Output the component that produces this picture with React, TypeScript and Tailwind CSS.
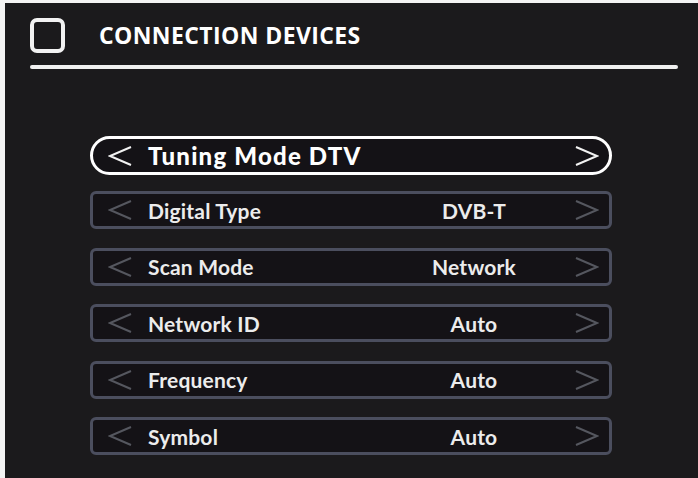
import React from "react";

type Row = { label: string; value: string };

const rows: Row[] = [
  { label: "Digital Type", value: "DVB-T" },
  { label: "Scan Mode", value: "Network" },
  { label: "Network ID", value: "Auto" },
  { label: "Frequency", value: "Auto" },
  { label: "Symbol", value: "Auto" },
];

function Chevron({ dir, color }: { dir: "left" | "right"; color: string }) {
  const pts = dir === "left" ? "23,1 2,10 23,19" : "1,1 22,10 1,19";
  return (
    <svg width="24" height="20" viewBox="0 0 24 20" className="shrink-0">
      <polyline points={pts} fill="none" stroke={color} strokeWidth="2" strokeLinejoin="miter" />
    </svg>
  );
}

function MenuRow({ row }: { row: Row }) {
  return (
    <div className="relative flex items-center h-[38px] border-[3px] border-[#4b4e5e] rounded-[6px] bg-[#141216]">
      <div className="ml-[15px]">
        <Chevron dir="left" color="#55575f" />
      </div>
      <span className="ml-[16px] text-[21px] font-bold text-[#ececec] leading-none tracking-[0.2px]">{row.label}</span>
      <span className="absolute left-[381px] -translate-x-1/2 text-[21px] font-bold text-[#ececec] leading-none tracking-[0.2px]">
        {row.value}
      </span>
      <div className="ml-auto mr-[10px]">
        <Chevron dir="right" color="#55575f" />
      </div>
    </div>
  );
}

export default function App() {
  return (
    <div className="w-[698px] h-[478px] bg-[#f4f4f4] pt-[3px] pl-[5px]">
      <div className="w-full h-full bg-[#1b1a1c] flex flex-col" style={{ fontFamily: "Lato, 'Noto Sans', sans-serif" }}>
        <div className="flex items-center pl-[25px] pt-[15px]">
          <div className="w-[35px] h-[35px] border-[4px] border-[#f2f2f2] rounded-[7px]" />
          <span
            className="ml-[34px] text-[23px] font-bold text-white tracking-[0.4px]"
            style={{ fontFamily: "'Open Sans', 'Liberation Sans', sans-serif" }}
          >
            CONNECTION DEVICES
          </span>
        </div>
        <div className="ml-[25px] mt-[12px] w-[648px] h-[4px] bg-[#f0f0f0] rounded-full" />

        <div className="ml-[85px] w-[522px] mt-[67px] flex flex-col">
          <div className="flex items-center h-[39px] border-[3px] border-white rounded-full bg-[#141216]">
            <div className="ml-[15px]">
              <Chevron dir="left" color="#f2f2f2" />
            </div>
            <span className="ml-[16px] text-[24px] font-black text-white leading-none tracking-[1.2px]">Tuning Mode DTV</span>
            <div className="ml-auto mr-[10px]">
              <Chevron dir="right" color="#f2f2f2" />
            </div>
          </div>
          <div className="mt-[16px] flex flex-col gap-[18.5px]">
            {rows.map((r) => (
              <MenuRow key={r.label} row={r} />
            ))}
          </div>
        </div>
      </div>
    </div>
  );
}
